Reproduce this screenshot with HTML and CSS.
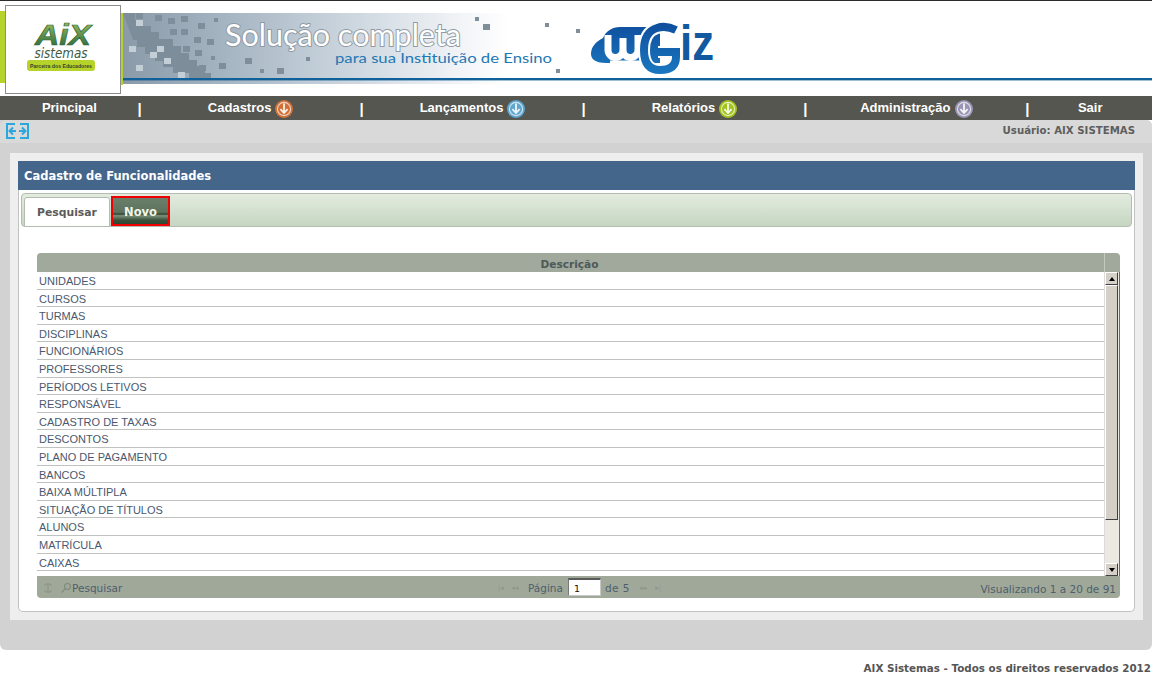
FILE: index.html
```html
<!DOCTYPE html>
<html lang="pt-BR">
<head>
<meta charset="utf-8">
<title>Cadastro de Funcionalidades</title>
<link rel="stylesheet" href="styles.css">
</head>
<body>
<svg width="0" height="0" class="defs">
  <defs>
    <symbol id="down" viewBox="0 0 18 18">
      <circle cx="9" cy="9" r="9" fill="currentColor"/>
      <circle cx="9" cy="9" r="6.6" fill="none" stroke="#ffffff" stroke-opacity=".7" stroke-width="1.1"/>
      <path d="M9 3.5v9M5.4 9.2 9 13l3.6-3.8" fill="none" stroke="#ffffff" stroke-opacity=".9" stroke-width="1.8"/>
    </symbol>
  </defs>
</svg>
<header class="top">
  <svg class="banner" width="1152" height="95" viewBox="0 1 1152 95">
    <defs>
      <linearGradient id="bg" x1="0" x2="1" y1="0" y2="0">
        <stop offset="0" stop-color="#8a9aa8"/>
        <stop offset=".3" stop-color="#a9b8c5"/>
        <stop offset=".62" stop-color="#d0d9e1"/>
        <stop offset=".88" stop-color="#f2f4f7"/>
        <stop offset="1" stop-color="#ffffff"/>
      </linearGradient>
      <linearGradient id="aix" x1="0" x2="0" y1="0" y2="1">
        <stop offset="0" stop-color="#a6c65a"/>
        <stop offset="1" stop-color="#1f5f3c"/>
      </linearGradient>
      <linearGradient id="wg" gradientUnits="userSpaceOnUse" x1="0" x2="0" y1="24" y2="74">
        <stop offset="0" stop-color="#0f4f9e"/>
        <stop offset="1" stop-color="#1a78c0"/>
      </linearGradient>
    </defs>
    <rect x="0" y="11" width="6" height="72" fill="#b5d32a"/>
    <rect x="119" y="13" width="4" height="72" fill="#b5d32a"/>
    <rect x="123" y="13" width="385" height="71" fill="url(#bg)"/>
    <path d="M123 13h12v7h8v6h8v6h8v7h14v7h8v7h8v7h8v6h8v7h6v6h-22v-6h-16v-6h-10v-6h-8v-7h-10v-7h-8v-7h-4z" fill="#7d8d9a"/>
    <g fill="#c3ced7">
      <rect x="129" y="46" width="7" height="6"/><rect x="150" y="52" width="7" height="6"/><rect x="157" y="46" width="7" height="6"/><rect x="164" y="58" width="7" height="6"/><rect x="136" y="65" width="7" height="6"/><rect x="178" y="72" width="7" height="6"/><rect x="136" y="20" width="7" height="6"/>
    </g>
    <g fill="#7f8e9b">
      <rect x="136" y="13" width="7" height="6"/><rect x="155" y="15" width="7" height="6"/><rect x="168" y="18" width="7" height="6"/><rect x="181" y="16" width="7" height="6"/><rect x="198" y="23" width="7" height="6"/><rect x="214" y="18" width="4" height="4"/><rect x="170" y="29" width="7" height="6"/><rect x="181" y="29" width="7" height="6"/><rect x="194" y="37" width="7" height="6"/><rect x="207" y="39" width="7" height="6"/><rect x="183" y="46" width="7" height="6"/><rect x="195" y="50" width="7" height="6"/><rect x="211" y="56" width="4" height="4"/><rect x="219" y="63" width="7" height="6"/><rect x="245" y="58" width="7" height="6"/><rect x="306" y="57" width="4" height="4"/><rect x="199" y="65" width="7" height="6"/><rect x="260" y="69" width="4" height="4"/><rect x="277" y="68" width="7" height="6"/>
      <rect x="475" y="17" width="4" height="4"/><rect x="483" y="24" width="7" height="6"/><rect x="545" y="23" width="4" height="4"/><rect x="576" y="29" width="4" height="4"/><rect x="556" y="69" width="4" height="4"/>
    </g>
    <rect x="123" y="78" width="1029" height="2.4" fill="#10609a"/>
    <text x="225" y="46" class="slogan" textLength="236" lengthAdjust="spacingAndGlyphs">Solução completa</text>
    <text x="335" y="63" class="sub" textLength="217" lengthAdjust="spacingAndGlyphs">para sua Instituição de Ensino</text>

    <path d="M591 54C591 46 597 41 603 38 606 31 612 27 620 27H660V63H606C597 63 591 60 591 54z" fill="url(#wg)"/>
    <path d="M608 35V50a7.500 7.500 0 0 0 15 0V38M623 50a7.500 7.500 0 0 0 15 0V35" fill="none" stroke="#ffffff" stroke-width="7"/>
    <path d="M610 60.500H640V66H610z" fill="#ffffff"/>
    <path d="M676 30Q666 25 657 28 644 32 644 50 644 70 660 70 676 70 676 57V52H658" fill="none" stroke="#ffffff" stroke-width="12"/>
    <path d="M676 30Q666 25 657 28 644 32 644 50 644 70 660 70 676 70 676 57V52H658" fill="none" stroke="url(#wg)" stroke-width="8"/>
    <text x="680" y="60" class="giz" textLength="34" lengthAdjust="spacingAndGlyphs">iz</text>
  </svg>
  <div class="logo">
    <svg width="114" height="86" viewBox="0 0 114 86">
      <text x="57" y="39" class="aix" textLength="56" lengthAdjust="spacingAndGlyphs">AiX</text>
      <text x="55" y="52" class="sis" textLength="53" lengthAdjust="spacingAndGlyphs">sistemas</text>
      <rect x="21" y="54" width="68" height="11" rx="3" fill="#b5d32a"/>
      <text x="55" y="62" class="par" textLength="62" lengthAdjust="spacingAndGlyphs">Parceira dos Educadores</text>
    </svg>
  </div>
</header>

<nav class="menu">
  <a class="mi w-a">Principal</a><span class="sep">|</span>
  <a class="mi w-b">Cadastros <svg class="arrow c-orange"><use href="#down"/></svg></a><span class="sep">|</span>
  <a class="mi w-b">Lançamentos <svg class="arrow c-blue"><use href="#down"/></svg></a><span class="sep">|</span>
  <a class="mi w-b">Relatórios <svg class="arrow c-lime"><use href="#down"/></svg></a><span class="sep">|</span>
  <a class="mi w-b">Administração <svg class="arrow c-purple"><use href="#down"/></svg></a><span class="sep">|</span>
  <a class="mi w-c">Sair</a>
</nav>

<main class="shell">
  <div class="toolbar">
    <svg class="expand" width="23" height="16" viewBox="0 0 23 16" fill="none" stroke="#29a8e0" stroke-width="2">
      <path d="M9 1H1v14h8M14 1h8v14h-8"/>
      <path d="M10 8H4M7 4.5 3.5 8 7 11.5M13 8h6M16 4.5 19.500 8 16 11.5"/>
    </svg>
    <span class="user">Usuário: AIX SISTEMAS</span>
  </div>
  <section class="panel">
    <div class="card">
      <h1 class="title">Cadastro de Funcionalidades</h1>
      <div class="body">
        <div class="tabs">
          <a class="tab tab-on">Pesquisar</a>
          <a class="tab tab-new">Novo</a>
        </div>
        <div class="grid">
          <div class="ghead"><span class="gcol">Descrição</span><span class="gcorner"></span></div>
          <div class="gmain">
            <div class="rows">
              <div class="row">UNIDADES</div>
              <div class="row">CURSOS</div>
              <div class="row">TURMAS</div>
              <div class="row">DISCIPLINAS</div>
              <div class="row">FUNCIONÁRIOS</div>
              <div class="row">PROFESSORES</div>
              <div class="row">PERÍODOS LETIVOS</div>
              <div class="row">RESPONSÁVEL</div>
              <div class="row">CADASTRO DE TAXAS</div>
              <div class="row">DESCONTOS</div>
              <div class="row">PLANO DE PAGAMENTO</div>
              <div class="row">BANCOS</div>
              <div class="row">BAIXA MÚLTIPLA</div>
              <div class="row">SITUAÇÃO DE TÍTULOS</div>
              <div class="row">ALUNOS</div>
              <div class="row">MATRÍCULA</div>
              <div class="row">CAIXAS</div>
            </div>
            <div class="sbar">
              <span class="sbtn"><span class="up"></span></span>
              <span class="thumb"></span>
              <span class="track"></span>
              <span class="sbtn"><span class="dn"></span></span>
            </div>
          </div>
          <div class="pager">
            <div class="p-left">
              <svg width="12" height="12" viewBox="0 0 12 12" fill="none" stroke="#8f978a" stroke-width="1.2"><path d="M9.500 3.500a4.500 4.500 0 0 0-7 0M2.500 8.500a4.500 4.500 0 0 0 7 0M6 1v10"/></svg>
              <svg class="lens" width="12" height="12" viewBox="0 0 12 12" fill="none" stroke="#7f8a7c" stroke-width="1.1"><circle cx="7.500" cy="4.500" r="3"/><path d="M5.300 6.700 1.500 10.500"/></svg>
              <span>Pesquisar</span>
            </div>
            <div class="p-mid">
              <span class="nav-ico">|◂</span><span class="nav-ico">◂◂</span>
              <span class="p-lbl">Página</span>
              <input class="p-in" value="1">
              <span class="p-of">de 5</span>
              <span class="nav-ico">▸▸</span><span class="nav-ico">▸|</span>
            </div>
            <div class="p-right">Visualizando 1 a 20 de 91</div>
          </div>
        </div>
      </div>
    </div>
  </section>
</main>
<footer class="foot">AIX Sistemas - Todos os direitos reservados 2012</footer>
</body>
</html>
```
FILE: styles.css
```css
* { box-sizing: border-box; }
html, body { margin: 0; padding: 0; background: #fff; }
body { width: 1152px; height: 678px; overflow: hidden; font-family: "DejaVu Sans", sans-serif; }
.defs { position: absolute; }

.top { position: relative; height: 96px; border-top: 1px solid #2b2b2b; }
.banner { display: block; }
.logo { position: absolute; left: 5px; top: 4px; width: 116px; height: 89px; background: #fff; border: 1px solid #8d8d8d; }
.logo svg { display: block; }
.aix { font: italic bold 29px "Liberation Sans", sans-serif; fill: url(#aix); stroke: #2f6a40; stroke-width: .7px; text-anchor: middle; }
.sis { font: italic 14px "DejaVu Sans", sans-serif; fill: #3c5c44; text-anchor: middle; }
.par { font: bold 5px "Liberation Sans", sans-serif; fill: #35452a; text-anchor: middle; }
.slogan { font: 400 31px "Lato", sans-serif; fill: #fff; stroke: #8f9aa4; stroke-width: 2px; paint-order: stroke; }
.sub { font: 400 14px "Lato", sans-serif; fill: #1f78b4; }
.giz { font: bold 50px "Liberation Sans", sans-serif; fill: #12599f; }

.menu { display: flex; align-items: center; height: 24px; background: #555650; color: #fff; }
.mi { display: flex; justify-content: center; align-items: center; gap: 4px; padding-bottom: 2px; font: bold 13px "Liberation Sans", sans-serif; }
.w-a { width: 139px; }
.w-b { width: 220.400px; }
.w-c { width: 124px; }
.sep { width: 2px; font: bold 15px "Liberation Sans", sans-serif; color: #fff; display: flex; justify-content: center; padding-top: 1px; }
.arrow { width: 18px; height: 18px; margin-top: 2px; margin-bottom: -2px; }
.c-orange { color: #cf7038; }
.c-blue { color: #5fa6d0; }
.c-lime { color: #a2c31e; }
.c-purple { color: #9a95b5; }

.shell { height: 530px; background: #d2d2d2; border-radius: 0 6px 6px 6px; }
.toolbar { display: flex; justify-content: space-between; align-items: flex-start; height: 23px; background: #d9d9d9; border-radius: 6px 6px 0 0; padding: 3px 17px 0 6px; }
.expand { display: block; }
.user { font-size: 10.200px; font-weight: 700; color: #5e5e5e; margin-top: 2px; }
.panel { height: 467px; margin: 10px 9px 0 10px; padding: 8px; background: #eeeeee; }
.card { height: 451px; display: flex; flex-direction: column; }
.title { margin: 0; height: 29px; line-height: 30px; padding-left: 6px; background: #44668a; color: #fff; font-size: 11.500px; font-weight: 700; }
.body { flex: 1; background: #fff; border: 1px solid #c2c2c2; border-top: 0; border-radius: 0 0 5px 5px; padding: 3px 2px 0; }
.tabs { display: flex; align-items: flex-start; height: 34px; padding: 3px 0 0 2px; gap: 1px; border: 1px solid #b4bcb0; border-radius: 4px; background: linear-gradient(#e3ecdf, #c5d6c2); }
.tab { display: flex; align-items: center; justify-content: center; font-weight: 700; padding-top: 1px; }
.tab-on { width: 86px; height: 30px; font-size: 10.800px; background: #fff; color: #5b5b5b; border: 1px solid #b4bcb0; border-radius: 3px 3px 0 0; }
.tab-new { width: 59px; height: 30px; font-size: 11.500px; margin-top: -1px; color: #f2f5e6; border: 2px solid #f00000; background: linear-gradient(#6b806b 0, #5d725d 55%, #2f452f 62%, #7c927c 68%, #39503a 85%, #2f452f 100%); }

.grid { width: 1083px; height: 345px; margin: 26px 0 0 16px; display: flex; flex-direction: column; }
.ghead { display: flex; height: 19px; background: #a1a99c; border-radius: 4px 4px 0 0; color: #4c5a58; font-size: 10.600px; font-weight: 700; }
.gcol { flex: 1; display: flex; align-items: center; justify-content: center; padding: 3px 2px 0 0; border-right: 1px solid #c3c8be; }
.gcorner { width: 15px; }
.gmain { display: flex; height: 304px; background: #fff; }
.rows { flex: 1; overflow: hidden; border-right: 1px solid #dcdcdc; }
.row { height: 17.600px; padding: 1px 0 0 2px; border-bottom: 1px solid #bfc2bf; font: 11px/17px "Liberation Sans", sans-serif; color: #4a586e; }
.sbar { width: 15px; display: flex; flex-direction: column; padding-right: 1px; background: #ece9e2; border-right: 1px solid #6b6b6b; }
.sbtn { height: 13px; flex: none; display: flex; align-items: center; justify-content: center; background: #d4d0c8; border: 1px solid; border-color: #fff #404040 #404040 #fff; }
.up { border: 3.500px solid transparent; border-top: 0; border-bottom: 4px solid #000; }
.dn { border: 3.500px solid transparent; border-bottom: 0; border-top: 4px solid #000; }
.thumb { height: 235px; flex: none; background: #d4d0c8; border: 1px solid; border-color: #fff #404040 #404040 #fff; }
.track { flex: 1; }

.pager { display: grid; grid-template-columns: 1fr auto 1fr; align-items: center; height: 22px; background: #a0a89a; border-radius: 0 0 4px 4px; color: #4f5f6c; font-size: 10.500px; }
.p-left { display: flex; align-items: center; padding: 2px 0 0 5px; }
.lens { margin-left: 6px; }
.p-mid { display: flex; align-items: center; margin-left: 2px; }
.nav-ico { width: 14px; font-size: 7px; color: #8f978a; text-align: center; padding-top: 2px; }
.p-lbl { margin-left: 6px; padding-top: 2px; }
.p-in { width: 33px; height: 18px; margin: 0 4px 0 5px; padding: 2px 0 0 5px; border: 1px solid #c8c8c8; border-top: 2px solid #5a5a5a; border-left-color: #777; background: #fff; color: #111; font: 9.500px "DejaVu Sans", sans-serif; }
.p-of { margin-right: 7px; letter-spacing: .5px; padding-top: 2px; }
.p-right { text-align: right; padding: 4px 4px 0 0; }

.foot { height: 28px; padding: 12px 1px 0 0; text-align: right; font-size: 10.350px; font-weight: 700; color: #555; }
```
